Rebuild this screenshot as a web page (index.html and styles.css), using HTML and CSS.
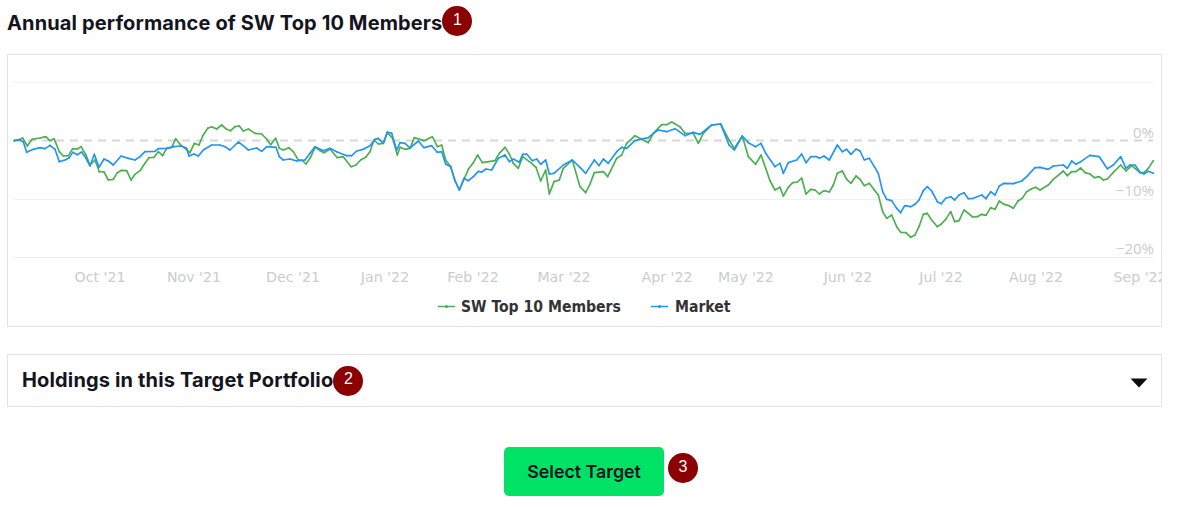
FILE: index.html
```html
<!DOCTYPE html>
<html lang="en">
<head>
<meta charset="utf-8">
<title>Annual performance</title>
<link rel="stylesheet" href="styles.css">
</head>
<body>
<main class="page">
  <header class="title-row">
    <h2 class="title">Annual performance of SW Top 10 Members</h2>
    <span class="badge badge-title">1</span>
  </header>

  <section class="chart-card">
    <svg class="chart" width="1154" height="271" viewBox="8 55 1154 271" xmlns="http://www.w3.org/2000/svg">
      <defs>
        <marker id="dot-green" viewBox="-2 -2 4 4" markerWidth="6" markerHeight="6" markerUnits="userSpaceOnUse"><circle r="1.6" fill="#4caf50"/></marker>
        <marker id="dot-blue" viewBox="-2 -2 4 4" markerWidth="6" markerHeight="6" markerUnits="userSpaceOnUse"><circle r="1.6" fill="#2196f3"/></marker>
      </defs>
      <g class="grid">
        <line x1="14" y1="82.5" x2="1153" y2="82.5"/>
        <line x1="14" y1="199.5" x2="1153" y2="199.5"/>
        <line x1="14" y1="257.5" x2="1153" y2="257.5"/>
      </g>
      <line class="zero" x1="14" y1="140.5" x2="1153" y2="140.5"/>
      <g class="y-labels">
        <text x="1154" y="138">0%</text>
        <text x="1154" y="196">−10%</text>
        <text x="1154" y="254">−20%</text>
      </g>
      <g class="x-labels">
        <text x="100" y="282">Oct '21</text>
        <text x="194" y="282">Nov '21</text>
        <text x="293" y="282">Dec '21</text>
        <text x="385" y="282">Jan '22</text>
        <text x="473" y="282">Feb '22</text>
        <text x="564" y="282">Mar '22</text>
        <text x="667" y="282">Apr '22</text>
        <text x="746" y="282">May '22</text>
        <text x="848" y="282">Jun '22</text>
        <text x="941" y="282">Jul '22</text>
        <text x="1036" y="282">Aug '22</text>
        <text x="1140" y="282">Sep '22</text>
      </g>
      <g class="series" transform="translate(0 110) scale(.33333)">
        <polyline class="green" points="42,92 60,88 68,84 82,108 96,88 120,84 137,80 150,92 162,86 178,125 190,138 205,137 218,116 232,117 243,110 258,135 270,165 285,150 298,185 312,186 325,210 340,208 352,188 365,181 380,182 393,210 405,193 420,182 435,160 447,143 462,142 475,125 488,137 500,115 515,112 527,86 540,103 570,128 583,100 597,105 608,78 623,55 635,50 650,57 665,45 680,58 692,62 705,50 718,48 730,63 745,57 765,70 785,72 800,87 812,104 827,85 838,115 850,120 866,113 880,125 895,150 905,150 918,162 930,145 945,112 960,122 972,128 990,117 1012,143 1030,140 1053,170 1068,165 1082,150 1097,142 1110,125 1122,90 1135,102 1150,100 1162,68 1178,85 1192,135 1200,112"/>
      </g>
      <g class="series" transform="translate(400 110) scale(.33333)">
        <polyline class="green" points="0,112 15,118 30,115 43,83 72,92 97,80 112,110 125,105 137,150 152,170 165,212 178,240 205,178 220,158 233,135 247,158 285,152 298,130 315,112 328,132 340,160 355,175 368,140 395,160 408,172 422,213 437,180 448,252 462,215 478,210 490,175 517,150 540,230 557,248 570,222 583,188 610,185 623,200 650,145 665,135 680,100 705,77 745,98 760,70 785,44 800,44 815,36 840,50 855,70 880,70 895,100 910,70 935,45 962,42 987,90 1003,115 1027,78 1045,140 1067,163 1083,135 1097,175 1110,212 1125,240 1140,232"/>
      </g>
      <g class="series" transform="translate(780 110) scale(.33333)">
        <polyline class="green" points="0,232 10,258 25,232 38,218 52,216 65,204 78,252 92,238 105,240 118,252 132,242 148,246 160,225 172,190 187,183 200,208 213,220 228,198 240,208 253,227 268,220 283,240 295,255 308,305 320,325 335,315 350,350 362,367 378,368 392,382 405,375 417,350 430,313 442,310 455,330 472,350 484,342 497,328 512,305 524,335 537,332 552,300 565,310 578,321 592,320 605,313 618,316 632,293 645,298 658,273 672,283 687,287 700,295 714,273 727,265 740,245 752,238 767,232 780,240 805,225 820,208 850,183 862,197 875,185 888,185 902,174 915,188 930,192 943,203 958,200 970,210 982,207 1000,187 1022,165 1038,183 1055,167 1080,188 1092,188 1105,175 1120,152"/>
      </g>
      <g class="series" transform="translate(0 110) scale(.33333)">
        <polyline class="blue" points="42,92 60,90 70,96 80,127 100,118 120,113 135,116 150,106 165,118 178,155 195,150 208,143 218,127 232,134 245,126 258,145 270,168 283,133 297,172 312,147 325,153 340,165 363,138 385,145 405,150 420,140 435,125 465,124 475,116 500,115 520,110 545,108 560,115 567,138 582,132 595,138 610,120 635,105 660,105 675,110 690,120 715,96 730,107 745,120 770,114 785,124 800,110 828,112 838,140 850,150 870,147 890,153 915,150 930,130 945,110 970,122 990,115 1010,125 1040,137 1055,137 1070,123 1090,118 1110,107 1125,88 1135,85 1150,100 1162,66 1175,70 1190,120 1200,98"/>
      </g>
      <g class="series" transform="translate(400 110) scale(.33333)">
        <polyline class="blue" points="0,98 15,100 30,114 55,93 72,113 95,107 112,127 125,125 137,162 152,170 165,212 178,240 192,205 205,212 220,200 235,184 245,186 258,177 275,180 295,145 315,135 328,155 340,147 358,157 368,133 380,132 397,152 410,147 422,163 437,150 448,192 462,190 490,165 517,150 540,172 557,190 583,150 597,167 610,147 625,160 650,125 665,112 680,115 705,92 745,83 760,70 775,60 800,65 825,56 855,77 880,67 900,73 935,45 962,42 987,105 1003,120 1027,78 1045,98 1067,110 1083,100 1097,130 1125,170 1140,160"/>
      </g>
      <g class="series" transform="translate(780 110) scale(.33333)">
        <polyline class="blue" points="0,160 10,190 25,158 50,150 65,132 78,158 92,140 110,140 118,145 132,138 148,150 172,105 187,125 200,118 213,133 228,117 240,123 253,150 268,145 283,170 295,190 308,245 320,268 335,272 350,295 362,308 374,287 392,290 405,283 417,270 430,242 442,230 455,243 472,275 484,281 497,265 512,260 524,270 537,255 552,248 565,266 580,265 605,255 618,266 632,245 645,255 658,228 672,220 700,221 725,213 740,200 765,173 780,172 805,178 820,168 850,165 862,175 875,153 888,163 902,155 930,136 958,140 982,176 1000,165 1022,140 1038,175 1050,165 1065,165 1080,187 1092,192 1105,184 1120,190"/>
      </g>
      <g class="legend">
        <line class="legend-green" x1="438" y1="306.5" x2="455" y2="306.5"/>
        <circle class="legend-dot-green" cx="446.5" cy="306.5" r="1.5"/>
        <text x="461" y="312">SW Top 10 Members</text>
        <line class="legend-blue" x1="651" y1="306.5" x2="668" y2="306.5"/>
        <circle class="legend-dot-blue" cx="659.5" cy="306.5" r="1.5"/>
        <text x="675" y="312">Market</text>
      </g>
    </svg>
  </section>

  <section class="holdings">
    <div class="holdings-label">
      <h3 class="holdings-title">Holdings in this Target Portfolio</h3>
      <span class="badge">2</span>
    </div>
    <svg class="caret" width="18" height="10" viewBox="0 0 18 10" xmlns="http://www.w3.org/2000/svg"><path d="M0.5 0.5H17.5L9 9.5Z"/></svg>
  </section>

  <div class="action">
    <button class="select-btn" type="button">Select Target</button>
    <span class="badge badge-action">3</span>
  </div>
</main>
</body>
</html>
```
FILE: styles.css
```css
* { box-sizing: border-box; }
html, body { margin: 0; padding: 0; background: #fff; }
body { width: 1179px; height: 507px; overflow: hidden; font-family: Inter, "Liberation Sans", sans-serif; color: #14141e; }

.page { width: 1155px; margin-left: 7px; padding-top: 6px; }

.title-row { display: flex; align-items: center; height: 30px; }
.title { margin: 4px 0 0; font-size: 20px; line-height: 26px; font-weight: 700; letter-spacing: .13px; }

.badge {
  display: flex; align-items: center; justify-content: center;
  flex: none; width: 30px; height: 30px; border-radius: 50%;
  background: #8b0000; color: #fff;
  font-family: "Liberation Sans", Arial, sans-serif; font-size: 16px; line-height: 1;
  padding-bottom: 3px;
}

.chart-card { margin-top: 18px; height: 273px; border: 1px solid #e3e3e3; overflow: hidden; }
.chart { display: block; }
.grid line { stroke: #f0f0f0; stroke-width: 1; }
.zero { stroke: #d6d6d6; stroke-width: 2; stroke-dasharray: 8 6; }
.y-labels text { fill: #ccc; font-family: "Open Sans", sans-serif; font-size: 15px; font-weight: 400; text-anchor: end; }
.x-labels text { fill: #ccc; font-family: "DejaVu Sans", sans-serif; font-size: 14.2px; text-anchor: middle; }
.series polyline { fill: none; stroke-width: 5; stroke-linejoin: round; }
.series .green { stroke: #4caf50; marker-start: url(#dot-green); marker-mid: url(#dot-green); marker-end: url(#dot-green); }
.series .blue { stroke: #2196f3; marker-start: url(#dot-blue); marker-mid: url(#dot-blue); marker-end: url(#dot-blue); }
.legend text { fill: #333; font-family: "DejaVu Sans Condensed", "DejaVu Sans", sans-serif; font-size: 15.6px; font-weight: 700; }
.legend-green { stroke: #4caf50; stroke-width: 1.5; }
.legend-blue { stroke: #2196f3; stroke-width: 1.5; }
.legend-dot-green { fill: #4caf50; }
.legend-dot-blue { fill: #2196f3; }

.holdings {
  display: flex; align-items: center; justify-content: space-between;
  margin-top: 27px; height: 53px; padding: 0 13px 0 14px;
  border: 1px solid #e3e3e3;
}
.holdings-label { display: flex; align-items: center; }
.holdings-title { margin: -2px 0 0; font-size: 20px; line-height: 26px; font-weight: 700; letter-spacing: .15px; }
.caret { display: block; margin-top: 5px; }
.caret path { fill: #0e0e0e; }

.action { position: relative; display: flex; justify-content: center; margin-top: 40px; padding-right: 1px; }
.select-btn {
  width: 160px; height: 49px; border: 0; border-radius: 5px;
  background: #00e266; color: #14141e;
  font-family: Inter, "Liberation Sans", sans-serif; font-size: 17.8px; font-weight: 600;
}
.badge-action { position: absolute; left: 661px; top: 6px; }
```
